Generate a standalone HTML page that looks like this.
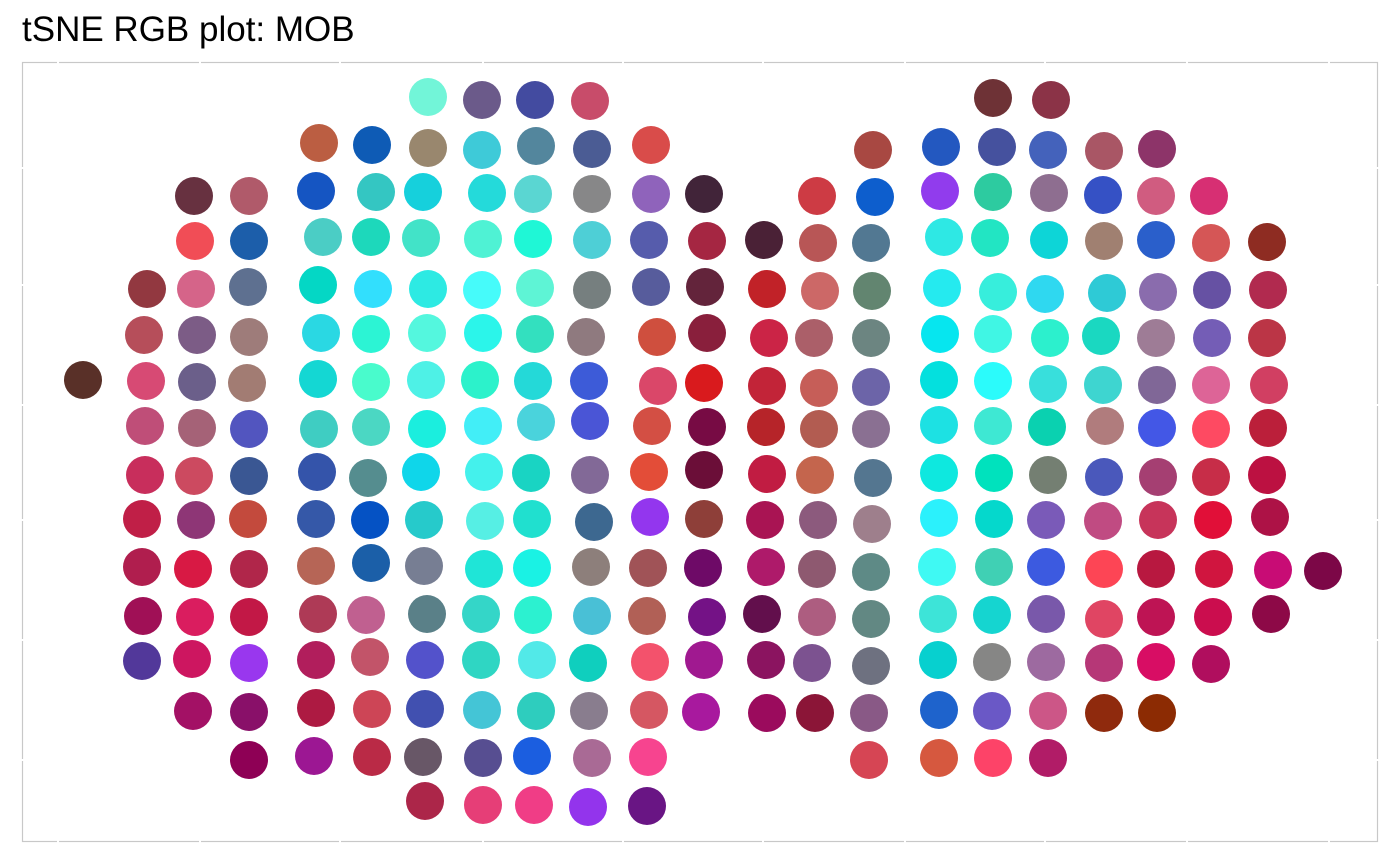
<!DOCTYPE html>
<html><head><meta charset="utf-8"><style>
html,body{margin:0;padding:0;background:#fff;}
body{width:1400px;height:865px;overflow:hidden;position:relative;font-family:"Liberation Sans",sans-serif;}
.t{position:absolute;left:22px;top:10px;font-size:35px;line-height:40px;color:#000;}
svg{position:absolute;left:0;top:0;}
</style></head><body>
<div class="t">tSNE RGB plot: MOB</div>
<svg width="1400" height="865" viewBox="0 0 1400 865">
<rect x="22.5" y="62.5" width="1355" height="779" fill="none" stroke="#c8c8c8" stroke-width="1.2"/>
<g id="tk" fill="#fff"></g>
<g id="d"></g>
</svg>
<script>
var D=`428,97,#72f5d8;482,100,#6b5a8a;535,100,#434ba0;590,101,#c84c6a;993,98,#6e3236;1051,100,#8b3347;
319,143,#bb5e42;372,145,#0e5bb5;428,148,#99876e;482,150,#3ecad8;536,146,#53869d;592,149,#4b5c94;651,145,#d94c4a;873,150,#a84842;941,147,#2358c0;997,147,#45519e;1048,150,#4462bb;1104,151,#a95665;1157,149,#8d3469;
194,196,#673140;249,196,#b05a6a;316,191,#1555c2;376,192,#34c6c2;423,192,#16d0dc;487,193,#24dada;533,194,#5ad6d2;592,194,#878788;651,194,#8f63bb;704,194,#412439;817,196,#cd3b44;875,197,#0d5ecd;940,191,#913ced;993,192,#2dcba0;1049,193,#8e6e90;1103,195,#3551c5;1156,196,#d05c80;1209,196,#d72f73;
195,241,#f14d56;249,241,#1c5eaa;323,237,#4bcdc5;371,237,#1dd8bb;421,238,#42e3c8;483,239,#4ff2d4;533,239,#1ff7d6;592,240,#4ecfd6;649,240,#565cac;707,241,#a52642;764,240,#4a2136;818,243,#b85656;871,243,#527892;944,237,#2ee8e4;990,238,#22e5c3;1049,240,#0dd5d7;1104,241,#a08071;1156,240,#2a5fcb;1211,243,#d55656;1267,242,#8e2c22;
147,289,#923840;196,289,#d56489;248,287,#5e7090;318,285,#04d7c5;373,289,#32dffd;428,289,#2deae3;482,290,#46fbfa;535,288,#5ef4d5;592,290,#767f7f;651,287,#575c9c;705,287,#63243b;767,289,#c12228;820,291,#cc6867;872,291,#628570;942,288,#25eaef;998,292,#37eedc;1045,294,#2fd8f0;1107,293,#2ecad6;1158,292,#8a6cad;1212,290,#6651a3;1268,290,#b12a4f;
144,335,#b64e5a;197,335,#7c5c86;249,337,#9e7c7a;321,333,#2ad8e3;371,334,#2cf4d4;427,333,#54f7de;483,333,#2bf5ea;535,334,#33e0bf;586,337,#8f7a7f;657,337,#cf4f3e;707,333,#891f3c;769,338,#cb2446;814,338,#ab5f69;871,338,#6c8581;940,334,#06e6ef;993,334,#40f6e4;1050,338,#2cf0cd;1101,336,#1ad8c1;1156,338,#9e7c96;1212,338,#745db6;1267,338,#bb3546;
83,380,#593028;146,381,#d74a74;197,382,#6b5f8a;247,383,#a27c73;318,379,#14d7d3;371,382,#49fbcc;426,380,#4ef1e6;480,380,#2cf2cb;533,381,#24d9d8;589,381,#3d5bd8;658,386,#da4769;704,383,#d91a1d;767,386,#c22438;819,388,#c65e58;871,387,#6c64a8;939,380,#04e0de;993,381,#2bfbfb;1048,384,#38dfdc;1103,385,#3ed5d0;1157,385,#806797;1211,385,#dd6497;1269,385,#d13f62;
145,426,#bf4e78;197,428,#a56277;249,429,#5255bf;319,429,#3fcdc2;371,427,#4bd7c3;427,429,#1beede;483,426,#42eef7;536,422,#4ad3dc;590,421,#4a55d6;652,426,#d34f44;707,427,#770b44;766,427,#b62429;819,429,#b25c51;871,429,#8a7092;939,425,#1de1e3;993,426,#3ee8d3;1047,427,#0ad1b0;1105,426,#b07c7d;1157,428,#4357e6;1211,429,#fe4a62;1268,428,#bb1f3a;
145,475,#c82e5c;194,476,#cc4a60;249,476,#3a5793;317,472,#3454aa;368,478,#558d8f;421,472,#0fd6ea;484,472,#44f1ec;531,473,#19d4c3;590,475,#826997;649,472,#e34d38;704,470,#6b0e38;767,474,#c11c42;815,475,#c4654d;873,478,#547690;939,473,#0ee8df;994,473,#00e2bd;1048,475,#747f72;1104,477,#4a58bb;1158,477,#a53f72;1211,477,#c72d48;1267,475,#bc1141;
142,519,#c01f47;196,520,#8e3676;248,519,#c34a3d;316,519,#3558a8;370,520,#0552c4;424,520,#26cacb;485,521,#56efe4;532,519,#20e0cf;594,522,#3d6890;650,517,#9336ee;704,519,#8e3f39;765,520,#a91453;818,520,#8c5a7d;872,524,#9e7f8c;939,518,#2bf1fc;994,519,#05d8cc;1046,520,#7a5ab8;1103,521,#c04b82;1158,520,#c7345a;1213,520,#e10f38;1270,517,#ad1246;
142,567,#b01e4e;193,569,#d81944;249,569,#b0264a;316,566,#b66556;371,563,#1b5fa8;424,566,#777e93;484,569,#1fe5d7;532,568,#1af2e4;591,567,#8d7f7b;648,568,#a05357;703,568,#6e0a67;766,567,#ae1a6a;817,569,#8e5970;871,572,#5e8a86;937,567,#3ff9f3;994,567,#40d0b4;1046,567,#3c5ae0;1104,569,#fd4555;1156,569,#b81840;1214,569,#d0153f;1273,570,#c80c75;1323,571,#7c0747;
143,616,#a01056;195,617,#da1d5f;249,617,#c21846;318,614,#ae3a56;366,615,#c06090;427,614,#5a8088;481,614,#34d6c8;533,615,#2cf1d0;592,616,#49c0d6;647,616,#b16056;707,617,#741286;762,614,#620f4c;817,617,#ad5d80;871,619,#628883;938,614,#3de4d8;992,615,#15d5d0;1046,614,#7958aa;1104,619,#e04563;1156,617,#be1454;1213,617,#cb0d4e;1271,614,#8d0947;
142,661,#52389a;192,659,#cd1660;249,663,#9937ee;316,660,#b11e5c;370,657,#c25469;425,660,#5352cb;481,660,#2fd6c3;537,660,#52e9e8;588,663,#0fcfbe;650,662,#f3526c;704,660,#a01990;766,660,#8b1460;812,663,#7c5290;871,666,#6e7180;938,660,#07d0cf;992,662,#868685;1046,662,#9d6aa0;1104,663,#b63777;1156,662,#d80d64;1211,664,#b00e5e;
193,711,#a31165;249,712,#891069;316,708,#ad1a42;372,709,#cd4556;425,709,#4150b0;482,710,#44c5d6;536,711,#2ecdbe;589,711,#897d8e;649,710,#d55762;701,712,#a8199e;767,713,#9b0b5d;815,713,#8b1537;869,713,#895986;939,710,#1e63cc;992,711,#6a58c6;1048,711,#cc5687;1104,713,#8f2a0d;1157,713,#8c2b03;
249,760,#8e0055;314,756,#9c1793;372,757,#ba2a46;423,757,#685767;483,758,#574e91;532,756,#1b5ee0;592,758,#a96a95;648,757,#f7448f;869,760,#d64554;939,758,#d6583f;993,758,#fd4368;1048,758,#b11c67;
425,801,#ac2649;483,805,#e63e77;534,805,#f03d86;588,807,#9334ec;647,806,#691584`;
var g=document.getElementById('d'),s='';
D.replace(/\s/g,'').split(';').forEach(function(e){var p=e.split(',');if(p.length==3)s+='<circle cx="'+p[0]+'" cy="'+p[1]+'" r="19" fill="'+p[2]+'"/>';});
g.innerHTML=s;
var t='';
[58,200,340,483,623,763,905,1045,1187,1329].forEach(function(x){t+='<rect x="'+(x-1)+'" y="61" width="2" height="3"/><rect x="'+(x-1)+'" y="840" width="2" height="3"/>';});
[168,285,405,520,640,760].forEach(function(y){t+='<rect x="21" y="'+(y-1)+'" width="3" height="2"/><rect x="1376" y="'+(y-1)+'" width="3" height="2"/>';});
document.getElementById('tk').innerHTML=t;
</script>
</body></html>
